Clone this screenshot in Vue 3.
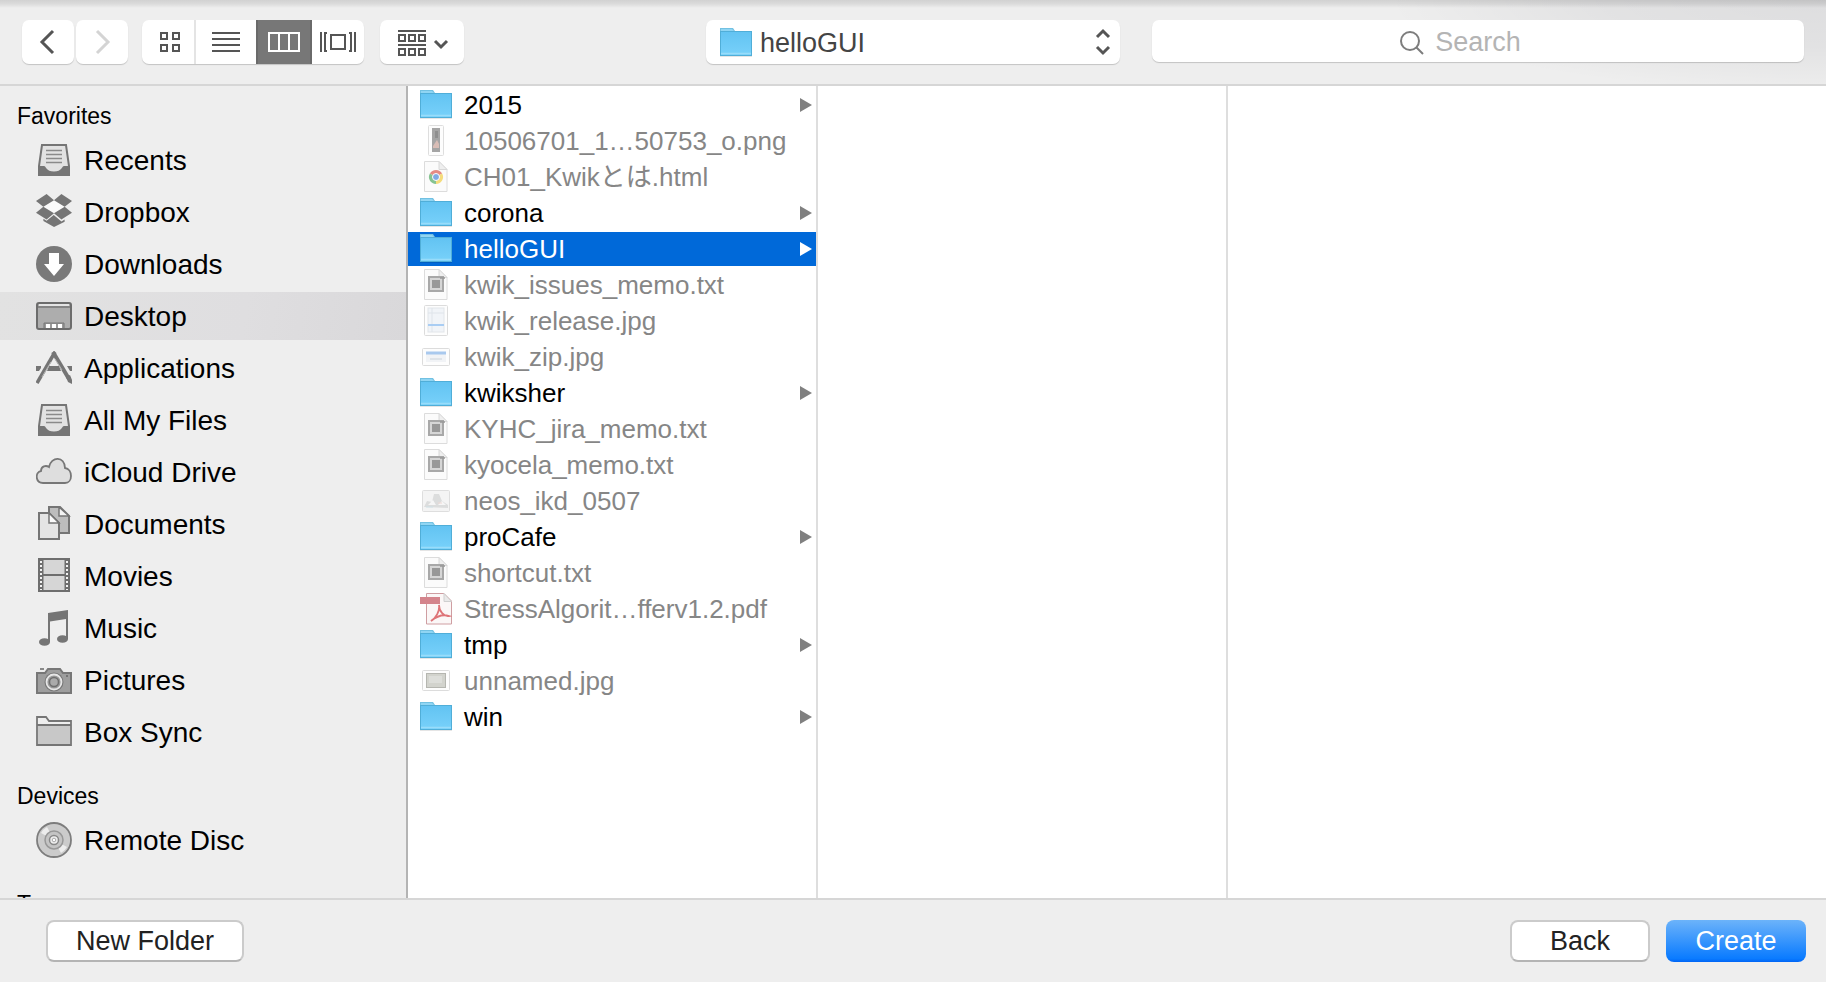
<script setup>
import { ref } from 'vue'

const tray = `
  <path d="M6 3H30L33 24V33H3V24Z" fill="#e2e2e2" stroke="#757575" stroke-width="2"/>
  <path d="M10 8.500H26M10 12.500H26M10 16.500H26M10 20.500H26" stroke="#8a8a8a" stroke-width="1.600"/>
  <path d="M2 24H8C10 24 10 29.500 18 29.500S26 24 28 24H34V34H2Z" fill="#757575"/>`

const icons = {
  tray,
  dropbox: `
    <g transform="scale(1.5) translate(0 -1)" fill="#757575">
      <path d="M12 5.100L4.900 9.500 12 13.900 19.100 9.500Z" fill="#fafafa"/>
      <path d="M7.060 1L0 5.610l4.882 3.908L12 5.123 7.060 1zm9.880 0L12 5.123l7.118 4.395L24 5.610 16.940 1zM0 13.428l7.060 4.610L12 13.914 4.882 9.518 0 13.428zm12 .486l4.940 4.123 7.060-4.610-4.882-3.910L12 13.915zm.014.887l-4.955 4.113-2.121-1.385v1.553L12.014 23l7.076-3.517v-1.553l-2.121 1.385-4.955-4.113z"/>
    </g>`,
  downloads: `
    <circle cx="18" cy="18" r="18" fill="#797979"/>
    <path d="M13 7H23V18H28L18 30 8 18H13Z" fill="#fff"/>`,
  desktop: `
    <rect x="1" y="5" width="34" height="26" rx="2" fill="#adadad" stroke="#6c6c6c" stroke-width="2"/>
    <path d="M3 7H33" stroke="#e4e4e4" stroke-width="2"/>
    <path d="M2 9H34" stroke="#777" stroke-width="1.500"/>
    <path d="M8 30V25H28V30" fill="#999" stroke="#777" stroke-width="1"/>
    <path d="M10 26h4v4h-4zM16 26h4v4h-4zM22 26h4v4h-4z" fill="#fff"/>`,
  applications: `
    <path d="M13 16H23L25 21H11Z M0 16H5V18L3 21H0Z M31 16H36V21H34Z" fill="#757575"/>
    <path d="M19 2L1 33" stroke="#757575" stroke-width="3.500"/>
    <path d="M17 2L33 29" stroke="#757575" stroke-width="4"/>
    <path d="M30 27L34 25 36 30V34L32 32Z" fill="#757575"/>
    <path d="M19 9L26 20M15 12L6 27" stroke="#b9b9b9" stroke-width="1"/>`,
  cloud: `
    <path d="M7 29C-1 29-1 18 5 17C5 12 10 11 13 13C15 2 29 2 29 14C37 15 37 29 29 29Z" fill="#dedede" stroke="#777" stroke-width="1.800"/>`,
  documents: `
    <path d="M13 1H24L33 10V27H13Z" fill="#bdbdbd" stroke="#757575" stroke-width="2"/>
    <path d="M23 1V10H33Z" fill="#f4f4f4" stroke="#757575" stroke-width="1.500"/>
    <path d="M3 7H13L23 17V33H3Z" fill="#e4e4e4" stroke="#757575" stroke-width="2"/>
    <path d="M13 7V17H23Z" fill="#fafafa" stroke="#757575" stroke-width="1.500"/>`,
  movies: `
    <rect x="3" y="1" width="30" height="32" fill="#d6d6d6" stroke="#6e6e6e" stroke-width="2"/>
    <path d="M5 2V32M31 2V32" stroke="#6e6e6e" stroke-width="5"/>
    <path d="M5 3V32M31 3V32" stroke="#f2f2f2" stroke-width="2" stroke-dasharray="2 2"/>
    <path d="M7 17H29" stroke="#6e6e6e" stroke-width="2"/>`,
  music: `
    <path d="M12 3L32 0V29H30V9L14 11.500V32H12Z" fill="#757575"/>
    <ellipse cx="8.500" cy="32" rx="5.500" ry="3.800" fill="#757575"/>
    <ellipse cx="26.500" cy="29" rx="5.500" ry="3.800" fill="#757575"/>`,
  pictures: `
    <path d="M1 11H9L12 7H24L27 11H35V31H1Z" fill="#9e9e9e" stroke="#777" stroke-width="2"/>
    <path d="M4 7H8" stroke="#888" stroke-width="2"/>
    <circle cx="18" cy="20" r="9.500" fill="#777"/>
    <circle cx="18" cy="20" r="7.500" fill="#999" stroke="#e6e6e6" stroke-width="1.800"/>
    <circle cx="18" cy="20" r="4.500" fill="#aaa" stroke="#6e6e6e" stroke-width="1.500"/>
    <circle cx="31" cy="14" r="1" fill="#666"/>`,
  folder: `
    <path d="M1 31V3H10L13 7H35V31Z" fill="#ededed" stroke="#757575" stroke-width="1.800"/>
    <path d="M2 11H34V30H2Z" fill="#c8c8c8"/>
    <path d="M1 11H35" stroke="#757575" stroke-width="1.800"/>`,
  disc: `
    <circle cx="18" cy="18" r="17" fill="#cbcbcb" stroke="#7d7d7d" stroke-width="1.800"/>
    <path d="M18 18L5 11A15 15 0 0 1 11 5ZM18 18L31 25A15 15 0 0 1 25 31Z" fill="#ededed"/>
    <circle cx="18" cy="18" r="9" fill="#c4c4c4" stroke="#989898" stroke-width="1.500"/>
    <circle cx="18" cy="18" r="4.500" fill="#efefef" stroke="#888" stroke-width="1.500"/>
    <circle cx="18" cy="18" r="1.800" fill="#fff" stroke="#aaa" stroke-width="1"/>`
}

const page = '<path d="M4.500 .500H19L27 8.500V30.500H4.500Z" fill="#fbfbfb" stroke="#dcdcdc"/><path d="M19 .500V8.500H27Z" fill="#efefef" stroke="#d8d8d8"/>'

const fileIcons = {
  folder: `
    <rect x="0" y="28" width="32" height="2" fill="#000" opacity=".100"/>
    <path d="M0 1H13L15 4H32V8H0Z" fill="#72c1e2"/>
    <path d="M1 2H12L14 4H1Z" fill="#90d5f3"/>
    <rect x=".500" y="4.500" width="31" height="24" fill="url(#folder-face)" stroke="#50aed8"/>
    <path d="M1 26.500H31" stroke="#98dcfa" stroke-width="1.500"/>`,
  png: `
    <rect x="8.500" y=".500" width="15" height="30" rx="1" fill="#fdfdfd" stroke="#dedede"/>
    <rect x="12" y="3" width="8" height="24" fill="#a5a5a5"/>
    <path d="M13 21L17 15 19 19V23H13Z" fill="#d9bdb6"/>
    <rect x="15" y="6" width="3" height="7" fill="#8f8f8f"/>`,
  html: `${page}
    <path d="M16 16L9.900 12.500A7 7 0 0 1 22.100 12.500Z" fill="#e58b84"/>
    <path d="M16 16L22.100 12.500A7 7 0 0 1 16 23Z" fill="#f5dc7c"/>
    <path d="M16 16V23A7 7 0 0 1 9.900 12.500Z" fill="#86c391"/>
    <circle cx="16" cy="16" r="3.500" fill="#7faae4" stroke="#fff" stroke-width="1"/>`,
  txt: `${page}
    <rect x="9" y="8" width="14" height="14" fill="#d6d6d6" stroke="#a8a8a8" stroke-width="2"/>
    <rect x="12" y="11" width="8" height="8" fill="#989898"/>
    <path d="M20 9H25" stroke="#999" stroke-width="1.500"/>`,
  release: `
    <rect x="4.500" y=".500" width="23" height="30" rx="1" fill="#fdfdfd" stroke="#dcdcdc"/>
    <rect x="8" y="3" width="16" height="24" fill="#f1f4f8" stroke="#e2e6ea"/>
    <path d="M12 3V27M8 8H24" stroke="#dfe4ea"/>
    <path d="M8 20H24" stroke="#a9cdf3" stroke-width="2"/>`,
  zip: `
    <rect x="2.500" y="7.500" width="27" height="17" rx="1" fill="#fdfdfd" stroke="#dcdcdc"/>
    <rect x="6" y="11" width="20" height="10" fill="#f1f3f6"/>
    <path d="M6 12H26" stroke="#a9c9ee" stroke-width="3"/>
    <path d="M10 18H22" stroke="#ccd3da"/>`,
  sketch: `
    <rect x="2.500" y="5.500" width="27" height="21" rx="1" fill="#f4f4f4" stroke="#dedede"/>
    <path d="M4 22L7 16 12 17 14 9 19 9 22 16 28 20V23Z" fill="#dcdddd"/>
    <path d="M8 20L13 15 16 20ZM18 20L22 16 26 20Z" fill="#f6f6f6"/>
    <path d="M6 22H13" stroke="#cfe0e6"/><path d="M18 18H22" stroke="#eed8d4"/>`,
  pdf: `
    <path d="M6.500 .500H24L31.500 8V31H6.500Z" fill="#fbf7f7" stroke="#cf9ea2"/>
    <path d="M24 .500V8.500H31.500Z" fill="#e9e9e9" stroke="#cfcfcf"/>
    <rect x="0" y="4" width="20" height="7" fill="#d4848c"/>
    <path d="M11 28C16 25 20 18 19 12C19 18 24 24 29 23C23 21 17 23 11 28Z" fill="none" stroke="#de7478" stroke-width="1.800"/>`,
  jpg: `
    <rect x="2.500" y="5.500" width="27" height="20" rx="1" fill="#fdfdfd" stroke="#dcdcdc"/>
    <rect x="6.500" y="8.500" width="19" height="14" fill="#d2d3cd" stroke="#b5b6b0"/>
    <rect x="9" y="11" width="13" height="7" fill="#dddeda"/>`
}

const sections = [
  {
    title: 'Favorites',
    items: [
      { name: 'Recents', icon: 'tray' },
      { name: 'Dropbox', icon: 'dropbox' },
      { name: 'Downloads', icon: 'downloads' },
      { name: 'Desktop', icon: 'desktop' },
      { name: 'Applications', icon: 'applications' },
      { name: 'All My Files', icon: 'tray' },
      { name: 'iCloud Drive', icon: 'cloud' },
      { name: 'Documents', icon: 'documents' },
      { name: 'Movies', icon: 'movies' },
      { name: 'Music', icon: 'music' },
      { name: 'Pictures', icon: 'pictures' },
      { name: 'Box Sync', icon: 'folder' }
    ]
  },
  { title: 'Devices', items: [{ name: 'Remote Disc', icon: 'disc' }] },
  { title: 'Tags', items: [] }
]

const files = [
  { name: '2015', icon: 'folder' },
  { name: '10506701_1…50753_o.png', icon: 'png' },
  { name: 'CH01_Kwikとは.html', icon: 'html' },
  { name: 'corona', icon: 'folder' },
  { name: 'helloGUI', icon: 'folder' },
  { name: 'kwik_issues_memo.txt', icon: 'txt' },
  { name: 'kwik_release.jpg', icon: 'release' },
  { name: 'kwik_zip.jpg', icon: 'zip' },
  { name: 'kwiksher', icon: 'folder' },
  { name: 'KYHC_jira_memo.txt', icon: 'txt' },
  { name: 'kyocela_memo.txt', icon: 'txt' },
  { name: 'neos_ikd_0507', icon: 'sketch' },
  { name: 'proCafe', icon: 'folder' },
  { name: 'shortcut.txt', icon: 'txt' },
  { name: 'StressAlgorit…fferv1.2.pdf', icon: 'pdf' },
  { name: 'tmp', icon: 'folder' },
  { name: 'unnamed.jpg', icon: 'jpg' },
  { name: 'win', icon: 'folder' }
]

const views = [
  {
    id: 'icons', label: 'Icon view', width: 24,
    art: '<path d="M3 13h6v6H3zM15 13h6v6h-6zM3 25h6v6H3zM15 25h6v6h-6z"/>'
  },
  {
    id: 'list', label: 'List view', width: 28,
    art: '<path d="M0 13H28M0 19H28M0 25H28M0 31H28"/>'
  },
  {
    id: 'columns', label: 'Column view', width: 32,
    art: '<path d="M1 13H31V31H1ZM11 13V31M21 13V31"/>'
  },
  {
    id: 'flow', label: 'Cover flow view', width: 36,
    art: '<path d="M1 12V32M7 13H5V31H7M11 15H25V29H11ZM29 13H31V31H29M35 12V32"/>'
  }
]

const place = ref('Desktop')
const selected = ref('helloGUI')
const view = ref('columns')
const query = ref('')
</script>

<template>
  <main class="dialog">
    <svg class="defs" width="0" height="0" aria-hidden="true">
      <linearGradient id="folder-face" x1="0" y1="0" x2="0" y2="1">
        <stop offset="0" stop-color="#62c3f2" />
        <stop offset="1" stop-color="#78d1fa" />
      </linearGradient>
    </svg>

    <header class="toolbar">
      <div class="tools">
        <div class="history">
          <button class="tool nav" type="button" aria-label="Go back">
            <svg width="52" height="44" viewBox="0 0 52 44"><path d="M31 11L20 22 31 33" /></svg>
          </button>
          <button class="tool nav" type="button" aria-label="Go forward" disabled>
            <svg width="52" height="44" viewBox="0 0 52 44"><path d="M21 11L32 22 21 33" /></svg>
          </button>
        </div>
        <div class="views" role="group" aria-label="View">
          <button
            v-for="v in views"
            :key="v.id"
            type="button"
            :class="['view', v.id, { on: view === v.id }]"
            :aria-label="v.label"
            :aria-pressed="view === v.id"
            @click="view = v.id"
          >
            <svg :width="v.width" height="44" :viewBox="`0 0 ${v.width} 44`" v-html="v.art"></svg>
          </button>
        </div>
        <button class="tool arrange" type="button" aria-label="Arrange items">
          <svg width="84" height="44" viewBox="0 0 84 44">
            <path d="M18 11H46M18 25H46M19 15h6v6h-6zM29 15h6v6h-6zM39 15h6v6h-6zM19 29h6v6h-6zM29 29h6v6h-6zM39 29h6v6h-6z" />
            <path class="caret" d="M55 21L61 27 67 21" />
          </svg>
        </button>
      </div>

      <div class="location">
        <svg class="location-icon" width="32" height="32" viewBox="0 0 32 32" v-html="fileIcons.folder"></svg>
        <select aria-label="Current folder">
          <option>helloGUI</option>
        </select>
        <svg class="location-arrows" width="16" height="28" viewBox="0 0 16 28">
          <path d="M2 9L8 3 14 9M2 19L8 25 14 19" />
        </svg>
      </div>

      <div class="search">
        <svg class="search-icon" width="24" height="24" viewBox="0 0 24 24">
          <circle cx="10" cy="10" r="9" /><path d="M16 16L23 23" />
        </svg>
        <input v-model="query" type="text" placeholder="Search" aria-label="Search" />
      </div>
    </header>

    <div class="body">
      <nav class="sidebar" aria-label="Places">
        <section v-for="s in sections" :key="s.title">
          <h2>{{ s.title }}</h2>
          <ul v-if="s.items.length">
            <li v-for="item in s.items" :key="item.name">
              <button
                type="button"
                :class="['place', { on: place === item.name }]"
                @click="place = item.name"
              >
                <svg width="36" height="36" viewBox="0 0 36 36" fill="none" v-html="icons[item.icon]"></svg>
                <span class="label">{{ item.name }}</span>
              </button>
            </li>
          </ul>
        </section>
      </nav>

      <ul class="column files">
        <li v-for="f in files" :key="f.name">
          <button
            type="button"
            :class="['file', { on: selected === f.name }]"
            :disabled="f.icon !== 'folder'"
            @click="selected = f.name"
          >
            <svg width="32" height="32" viewBox="0 0 32 32" v-html="fileIcons[f.icon]"></svg>
            <span class="name">{{ f.name }}</span>
            <svg v-if="f.icon === 'folder'" class="more" width="12" height="14" viewBox="0 0 12 14">
              <path d="M0 0L12 7 0 14Z" />
            </svg>
          </button>
        </li>
      </ul>
      <div class="column"></div>
      <div class="column last"></div>
    </div>

    <footer class="actions">
      <button class="push new" type="button">New Folder</button>
      <button class="push" type="button">Back</button>
      <button class="push primary" type="button">Create</button>
    </footer>
  </main>
</template>

<style>
body {
  margin: 0;
}
</style>

<style scoped>
.dialog {
  display: flex;
  flex-direction: column;
  height: 100vh;
  background: #eee;
  color: #000;
  font-family: "Liberation Sans", "Noto Sans CJK JP", sans-serif;
  font-size: 27px;
}

.defs {
  position: absolute;
}

svg {
  display: block;
  flex: none;
}

button,
input,
select {
  margin: 0;
  padding: 0;
  border: 0;
  font: inherit;
  color: inherit;
  background: none;
}

ul,
h2 {
  margin: 0;
  padding: 0;
  list-style: none;
}

.toolbar {
  display: grid;
  grid-template-columns: 684fr 446fr 652fr;
  align-items: start;
  flex: none;
  padding: 20px 22px;
  border-bottom: 2px solid #d6d6d6;
  background:
    linear-gradient(rgba(0, 0, 0, 0.12), rgba(0, 0, 0, 0.08) 4px, transparent 8px),
    radial-gradient(ellipse 24% 110% at 100% 0, rgba(0, 0, 20, 0.07), rgba(0, 0, 20, 0.05) 50%, transparent),
    #eee;
}

.tools,
.history,
.views {
  display: flex;
}

.history {
  gap: 2px;
  margin-right: 14px;
}

.tool,
.views,
.location,
.search {
  border-radius: 7px;
  background: #fff;
  box-shadow: 0 1px 1px rgba(0, 0, 0, 0.18);
}

.nav svg,
.views svg,
.arrange svg,
.location-arrows,
.search-icon {
  fill: none;
  stroke: #555;
  stroke-width: 2px;
}

.nav svg {
  stroke-width: 3px;
}

.nav:disabled svg {
  stroke: #d4d4d4;
}

.views {
  overflow: hidden;
  margin-right: 16px;
}

.view {
  display: flex;
  justify-content: center;
  box-sizing: border-box;
}

.view.icons {
  width: 54px;
  padding-left: 4px;
  border-right: 2px solid #e4e4e4;
}

.view.list {
  width: 60px;
}

.view.columns {
  width: 56px;
}

.view.flow {
  width: 52px;
}

.view.on {
  background: #777;
  box-shadow: inset 2px 0 #6a6a6a, inset -2px 0 #6a6a6a;
}

.view.on svg {
  stroke: #fff;
}

.caret {
  stroke-width: 3px;
}

.location {
  position: relative;
  margin-right: 32px;
  color: #444;
}

.location select {
  display: block;
  box-sizing: border-box;
  width: 100%;
  height: 44px;
  padding: 2px 40px 0 54px;
  border-radius: 7px;
  appearance: none;
}

.location-icon {
  position: absolute;
  left: 14px;
  top: 7px;
}

.location-arrows {
  position: absolute;
  right: 9px;
  top: 8px;
  stroke-width: 3px;
  pointer-events: none;
}

.search {
  position: relative;
}

.search input {
  display: block;
  box-sizing: border-box;
  width: 100%;
  height: 42px;
  padding-top: 2px;
  text-align: center;
}

.search input::placeholder {
  color: #b4b4b4;
  opacity: 1;
}

.search-icon {
  position: absolute;
  left: calc(50% - 78px);
  top: 11px;
  stroke: #7d7d7d;
}

.body {
  display: grid;
  grid-template-columns: 408fr 410fr 410fr 598fr;
  flex: 1;
  min-height: 0;
}

.sidebar {
  display: flex;
  flex-direction: column;
  gap: 20px;
  overflow: hidden;
  padding-top: 10px;
  border-right: 2px solid #b4b4b4;
  font-size: 28px;
}

.sidebar h2 {
  padding: 2px 0 0 17px;
  font-size: 23px;
  font-weight: 400;
  line-height: 36px;
}

.sidebar ul {
  display: grid;
  gap: 4px;
  margin-top: 2px;
}

.place {
  display: flex;
  align-items: center;
  gap: 12px;
  width: 100%;
  height: 48px;
  padding-left: 36px;
  text-align: left;
}

.label {
  padding-top: 2px;
}

.place.on {
  background: linear-gradient(100deg, #e2e2e2, #dfdee0 60%, #d9d8da);
}

.column {
  overflow: hidden;
  border-right: 2px solid #dedede;
  background: #fff;
}

.column.last {
  border-right: 0;
}

.files {
  display: flex;
  flex-direction: column;
  gap: 2px;
  padding-top: 2px;
  font-size: 26px;
}

.file {
  display: flex;
  align-items: center;
  gap: 12px;
  width: 100%;
  height: 34px;
  padding: 0 4px 0 12px;
  text-align: left;
  white-space: nowrap;
}

.file:disabled {
  color: #868686;
}

.name {
  flex: 1;
  line-height: 34px;
}

.more {
  fill: #808080;
}

.file.on {
  background: #0069d9;
  color: #fff;
}

.file.on .more {
  fill: #fff;
}

.actions {
  display: flex;
  gap: 16px;
  flex: none;
  padding: 20px 20px 20px 46px;
  border-top: 2px solid #d6d6d6;
}

.push {
  box-sizing: border-box;
  width: 140px;
  height: 42px;
  border: 2px solid #cbcbcb;
  border-bottom-color: #b4b4b4;
  border-radius: 8px;
  background: #fff;
  color: #222;
}

.push.new {
  width: 198px;
  margin-right: auto;
}

.push.primary {
  border: 0;
  background: linear-gradient(#6cb3fa, #0a7bff 92%, #0064f5);
  color: #fff;
}
</style>
